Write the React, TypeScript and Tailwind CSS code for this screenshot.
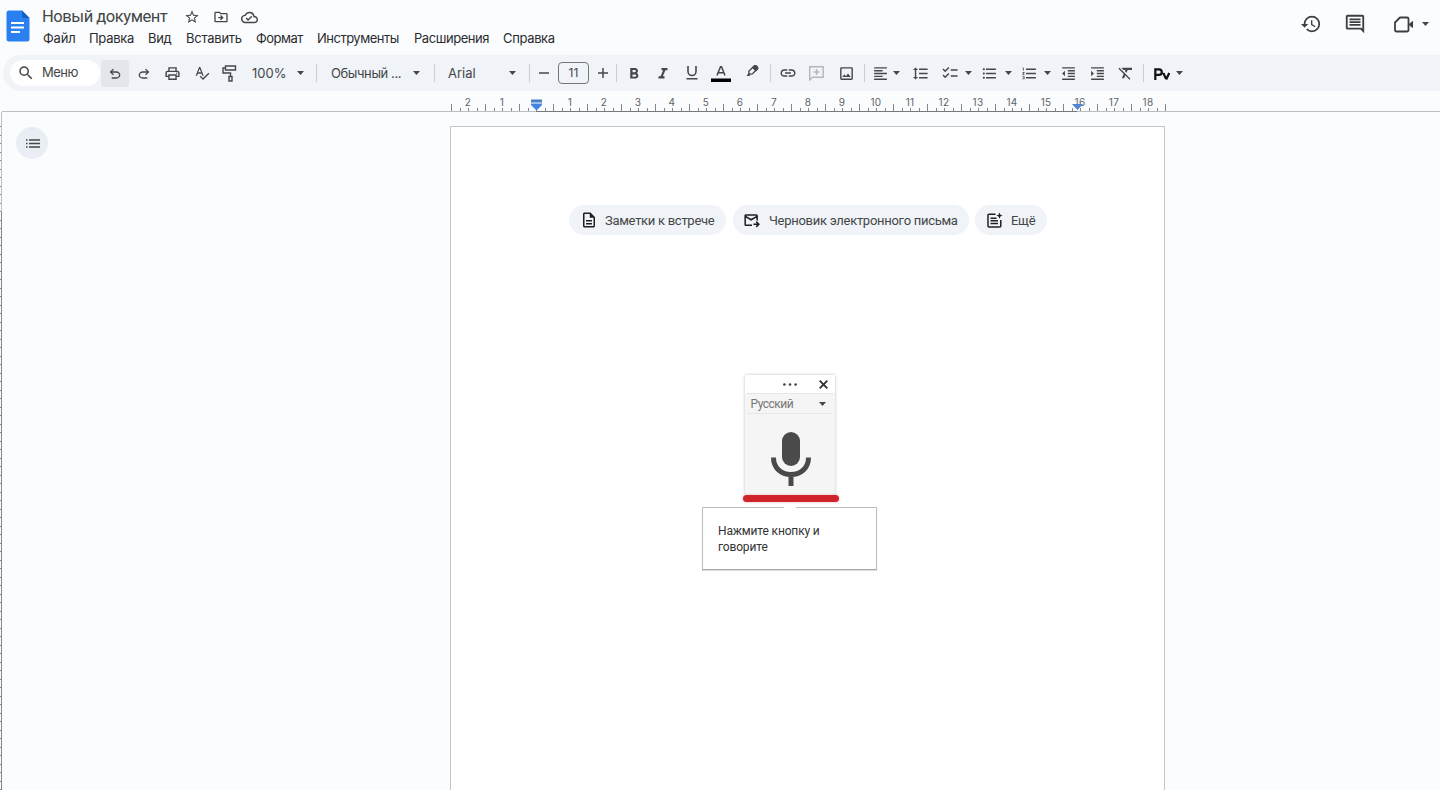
import type { ReactNode } from 'react';
import {
  MdStarOutline,
  MdOutlineDriveFileMove,
  MdOutlineCloudDone,
  MdHistory,
  MdOutlinePrint,
  MdSpellcheck,
  MdOutlineImage,
  MdFormatAlignLeft,
  MdFormatLineSpacing,
  MdChecklist,
  MdFormatListBulleted,
  MdFormatListNumbered,
  MdFormatIndentDecrease,
  MdFormatIndentIncrease,
  MdFormatClear,
  MdSearch,
  MdLink,
  MdFormatBold,
  MdFormatItalic,
  MdOutlineDescription,
  MdOutlineComment,
} from 'react-icons/md';

const Cell = ({ w, children }: { w: string; children?: ReactNode }) => (
  <div className={`flex h-full shrink-0 items-center justify-center ${w}`}>{children}</div>
);

const Sep = () => <div className="h-[18px] w-px shrink-0 bg-[#c9cdd3]" />;

const Caret = () => (
  <svg className="h-1 w-[7px] shrink-0" viewBox="0 0 8 4" preserveAspectRatio="none" fill="#444746">
    <path d="M0 0h8L4 4z" />
  </svg>
);

const menus = [
  { t: 'Файл', c: 'w-[46px] tracking-[-0.2px]' },
  { t: 'Правка', c: 'w-[59px] tracking-[-0.3px]' },
  { t: 'Вид', c: 'w-[38px] tracking-[-0.3px]' },
  { t: 'Вставить', c: 'w-[70px] tracking-[-0.25px]' },
  { t: 'Формат', c: 'w-[61px] tracking-[-0.5px]' },
  { t: 'Инструменты', c: 'w-[97px] tracking-[-0.5px]' },
  { t: 'Расширения', c: 'w-[89px] tracking-[-0.45px]' },
  { t: 'Справка', c: 'w-[60px] tracking-[-0.35px]' },
];

function Header() {
  return (
    <header className="flex h-[55px] shrink-0 items-start">
      <svg className="ml-[6px] mt-[10px] h-[32px] w-[24px] shrink-0" viewBox="0 0 24 32">
        <path d="M2.5 0.5H16L23.5 8V29a2.500 2.500 0 0 1-2.500 2.500H2.500A2.500 2.500 0 0 1 0.500 29V3A2.500 2.500 0 0 1 2.500 0.500z" fill="#2a80f0" />
        <path d="M16 0.500L23.500 8H18a2 2 0 0 1-2-2z" fill="#1560c8" />
        <path d="M5 13h13M5 17.500h13M5 22h9" stroke="#fff" strokeWidth="1.800" />
      </svg>
      <div className="ml-3 flex flex-col">
        <div className="mt-[6px] flex h-[22px] items-center text-[#444746]">
          <span className="w-[142px] whitespace-nowrap pt-px font-[family-name:Roboto,sans-serif] text-[16.5px] tracking-[-0.45px]">Новый документ</span>
          <MdStarOutline className="h-4 w-4" />
          <MdOutlineDriveFileMove className="ml-[13px] h-4 w-4" />
          <MdOutlineCloudDone className="ml-3 h-[17px] w-[17px]" />
        </div>
        <nav className="ml-px flex h-[21px] items-center text-[13px] text-[#2a2c2e]">
          {menus.map((m) => (
            <span key={m.t} className={`shrink-0 whitespace-nowrap ${m.c}`}>{m.t}</span>
          ))}
        </nav>
      </div>
      <div className="ml-auto mr-[11px] mt-[12px] flex h-6 items-center text-[#3c3f42]">
        <MdHistory className="mr-[22px] h-[22px] w-[22px]" />
        <MdOutlineComment className="mr-[28px] h-[22px] w-[22px]" />
        <svg className="mr-[8px] h-[17px] w-[20px]" viewBox="0 0 20 17" fill="none" stroke="currentColor" strokeWidth="1.800">
          <path d="M6 1.500h7a1.500 1.500 0 0 1 1.500 1.500v11a1.500 1.500 0 0 1-1.500 1.500H2.500A1.500 1.500 0 0 1 1 14V6.500z" strokeLinejoin="round" />
          <path d="M15 8.500l3.500-3v6z" fill="currentColor" strokeWidth="1" />
        </svg>
        <Caret />
      </div>
    </header>
  );
}

function Toolbar() {
  const i = 'h-[17px] w-[17px]';
  const undo =
    'M280-200v-80h284q63 0 109.500-40T720-420q0-60-46.500-100T564-560H312l104 104-56 56-200-200 200-200 56 56-104 104h252q97 0 166.500 63T800-420q0 94-69.500 157T564-200H280Z';
  return (
    <div className="ml-[3px] flex h-9 shrink-0 items-center overflow-hidden rounded-l-full bg-[#f0f3f8] text-[13px] text-[#444746]">
      <div className="ml-[7px] flex h-[26px] w-[90px] shrink-0 items-center rounded-full bg-white">
        <MdSearch className="ml-[7px] h-[18px] w-[18px]" />
        <span className="ml-[7px] tracking-[-0.5px]">Меню</span>
      </div>
      <div className="ml-px flex h-[27px] w-[28px] shrink-0 items-center justify-center rounded-[3px] bg-[#e3e6ea]">
        <svg className="mt-[2px] h-4 w-4" viewBox="0 -960 960 960" fill="currentColor"><path d={undo} /></svg>
      </div>
      <Cell w="w-[29px]">
        <svg className="mt-[2px] h-4 w-4 -scale-x-100" viewBox="0 -960 960 960" fill="currentColor"><path d={undo} /></svg>
      </Cell>
      <Cell w="w-[29px]"><MdOutlinePrint className={i} /></Cell>
      <Cell w="w-[29px]"><MdSpellcheck className="h-4 w-4" /></Cell>
      <Cell w="w-[27px]">
        <svg className="h-[17px] w-[15px]" viewBox="0 0 15 17" fill="none" stroke="currentColor" strokeWidth="1.400">
          <path d="M3.500 1h10v4h-10zM3.500 3H1v5h7.500v3.500M7 11.500h3V16H7z" />
        </svg>
      </Cell>
      <div className="ml-[9px] w-[45px] shrink-0 pt-px">100%</div>
      <Caret />
      <div className="w-[12px] shrink-0" /><Sep />
      <div className="ml-[14px] w-[82px] shrink-0 whitespace-nowrap pt-px tracking-[-0.4px]">Обычный ...</div>
      <Caret />
      <div className="w-[14px] shrink-0" /><Sep />
      <div className="ml-[13px] w-[61px] shrink-0 pt-px">Arial</div>
      <Caret />
      <div className="w-[13px] shrink-0" /><Sep />
      <Cell w="w-[28px]">
        <svg className="h-[10px] w-[10px]" viewBox="0 0 11 11" stroke="currentColor" strokeWidth="1.600"><path d="M0 5.500h11" /></svg>
      </Cell>
      <div className="flex h-[22px] w-[31px] shrink-0 items-center justify-center rounded-[4px] border border-[#747775] text-[12px]">11</div>
      <Cell w="w-[27px]">
        <svg className="h-[10px] w-[10px]" viewBox="0 0 11 11" stroke="currentColor" strokeWidth="1.600"><path d="M0 5.500h11M5.500 0v11" /></svg>
      </Cell>
      <Sep />
      <Cell w="w-[33px]"><MdFormatBold className="mt-px h-[18px] w-[18px]" /></Cell>
      <Cell w="w-[26px]"><MdFormatItalic className="mt-[2px] h-[18px] w-[18px]" /></Cell>
      <Cell w="w-[31px]">
        <svg className="h-[14px] w-[12px]" viewBox="0 0 12 14" fill="none" stroke="currentColor">
          <path d="M2 0v5.500a4 4 0 0 0 8 0V0" strokeWidth="1.600" /><path d="M0.500 12.800h11" strokeWidth="1.400" />
        </svg>
      </Cell>
      <Cell w="w-[28px]">
        <svg className="mt-px h-[16px] w-[20px]" viewBox="0 0 20 16" fill="none">
          <path d="M6 9.500L9.500 0.800h1L14 9.500M7.200 6.800h5.600" stroke="currentColor" strokeWidth="1.500" />
          <path d="M0 12.500h20v3.500H0z" fill="#000" />
        </svg>
      </Cell>
      <Cell w="w-[34px]">
        <svg className="mb-[4px] h-[12px] w-[13px]" viewBox="0 0 14 13" fill="none" stroke="currentColor" strokeWidth="1.500">
          <path d="M3.200 6.500L8.800 1.200Q10.200 0.200 11.500 1.200L12.200 2Q13.200 3.200 12 4.500L6.800 9.700L3 10z" />
          <path d="M7.500 2.800L9.500 1L12.500 4L10.300 6z" fill="currentColor" />
          <path d="M0.500 12H3.500L5 10.200L2.800 9z" fill="currentColor" stroke="none" />
        </svg>
      </Cell>
      <div className="w-px shrink-0" /><Sep />
      <Cell w="w-[33px]"><MdLink className="h-[18px] w-[18px]" /></Cell>
      <Cell w="w-[25px]">
        <svg className="h-[15px] w-[15px] text-[#b3b7bb]" viewBox="0 0 15 15" fill="none" stroke="currentColor" strokeWidth="1.400">
          <path d="M0.700 14V0.800h13.500v10.500H3.500zM7.500 3v6M4.500 6h6" />
        </svg>
      </Cell>
      <Cell w="w-[34px]"><MdOutlineImage className={i} /></Cell>
      <div className="w-px shrink-0" /><Sep />
      <Cell w="w-[30px]"><MdFormatAlignLeft className={i} /></Cell>
      <div className="-ml-[2px]"><Caret /></div>
      <Cell w="w-[40px]"><MdFormatLineSpacing className={i} /></Cell>
      <Cell w="w-[20px]"><MdChecklist className="h-[18px] w-[18px]" /></Cell>
      <div className="ml-[5px]"><Caret /></div>
      <Cell w="w-[35px]"><MdFormatListBulleted className="h-[17px] w-[17px]" /></Cell>
      <div className="-ml-[2px]"><Caret /></div>
      <Cell w="w-[34px]"><MdFormatListNumbered className="h-[17px] w-[17px]" /></Cell>
      <div className="-ml-[2px]"><Caret /></div>
      <Cell w="w-[34px]"><MdFormatIndentDecrease className={i} /></Cell>
      <Cell w="w-[25px]"><MdFormatIndentIncrease className={i} /></Cell>
      <Cell w="w-[32px]"><MdFormatClear className="h-[18px] w-[18px]" /></Cell>
      <div className="w-px shrink-0" /><Sep />
      <Cell w="w-[36px]">
        <svg className="mt-[3px] h-[13px] w-[16px]" viewBox="0 0 16 13" fill="none" stroke="#111" strokeWidth="2.200">
          <path d="M1.300 12V1.300h3.700a2.700 2.700 0 0 1 0 5.600H1.300M9.300 5l2.800 6M15.200 5l-3 6.500" />
        </svg>
      </Cell>
      <div className="-ml-[4px]"><Caret /></div>
    </div>
  );
}

function Ruler() {
  const cells = Array.from({ length: 21 }, (_, n) => n - 2);
  return (
    <div className="relative h-[21px] w-full shrink-0">
      <div className="ml-[451px] flex h-5">
        {cells.map((n) => (
          <div key={n} className="flex w-[34px] shrink-0 flex-col">
            <div className="flex h-[13px] items-start pt-[5px]">
              <span className="w-[34px] text-center text-[10px] leading-[12px] tracking-[0.3px] text-[#606366]">
                {n === 0 ? '\u00a0' : Math.abs(n)}
              </span>
            </div>
            <div className="flex h-[7px] items-end">
              <i className="mr-[7.500px] h-[7px] w-px bg-[#85888b]" />
              <i className="mr-[7.500px] h-[3px] w-px bg-[#85888b]" />
              <i className="mr-[7.500px] h-[3px] w-px bg-[#85888b]" />
              <i className="h-[3px] w-px bg-[#85888b]" />
            </div>
          </div>
        ))}
        <i className="mt-[13px] h-[7px] w-px bg-[#85888b]" />
      </div>
      <div className="flex h-px">
        <div className="ml-[2px] w-[534px] bg-[#bcbfc2]" />
        <div className="w-[541px] bg-[#77797c]" />
        <div className="grow bg-[#bcbfc2]" />
      </div>
      <svg className="absolute left-[531px] top-[8px] h-[12px] w-[11px]" viewBox="0 0 11 12">
        <path d="M0 0.500h11v3H0z" fill="#4a7fc4" />
        <path d="M0 4.500h11v1.500L5.500 11.500L0 6z" fill="#4384e0" />
      </svg>
      <svg className="absolute left-[1072px] top-[13px] h-[6px] w-[11px]" viewBox="0 0 11 6">
        <path d="M0 0h11L5.500 6z" fill="#4c86d0" />
      </svg>
    </div>
  );
}

function SideRuler() {
  const ticks = Array.from({ length: 80 }, (_, n) => n);
  return (
    <div className="flex h-full w-[2px] shrink-0">
      <div className="flex w-px flex-col overflow-hidden pt-[14px]">
        {ticks.map((n) => (
          <i key={n} className="mb-[7.500px] h-px w-px shrink-0 bg-[#85888b]" />
        ))}
      </div>
      <div className="flex w-px flex-col">
        <div className="h-[100px] bg-[#bcbfc2]" />
        <div className="grow bg-[#85888b]" />
      </div>
    </div>
  );
}

const Chip = ({ w, icon, children }: { w: string; icon: ReactNode; children: ReactNode }) => (
  <button className={`flex h-[30px] items-center whitespace-nowrap rounded-full bg-[#f0f3f8] pl-[11px] font-[family-name:Roboto,sans-serif] text-[13px] tracking-[-0.28px] text-[#444746] ${w}`}>
    <span className="flex w-[25px] shrink-0">{icon}</span>
    <span className="pt-px">{children}</span>
  </button>
);

function VoicePanel() {
  return (
    <div className="absolute left-[251px] top-[248px] flex w-[175px] flex-col items-center font-[family-name:Roboto,sans-serif]">
      <div className="flex h-[120px] w-[90px] flex-col bg-[#f5f5f5] shadow-[0_0_3px_rgba(0,0,0,0.25)]">
        <div className="flex h-[18px] items-center bg-white">
          <svg className="ml-[38px] h-[3px] w-[14px]" viewBox="0 0 15 3" fill="#444">
            <circle cx="1.500" cy="1.500" r="1.400" /><circle cx="7.500" cy="1.500" r="1.400" /><circle cx="13.500" cy="1.500" r="1.400" />
          </svg>
          <svg className="ml-[22px] h-[9px] w-[9px]" viewBox="0 0 9 9" stroke="#333" strokeWidth="1.900"><path d="M0.700 0.700l7.600 7.600M8.300 0.700L0.700 8.300" /></svg>
        </div>
        <div className="mx-[2px] flex h-[21px] items-center border-b border-t border-[#e6e6e6] text-[12px] tracking-[-0.5px] text-[#777]">
          <span className="ml-[4px] w-[68px]">Русский</span>
          <Caret />
        </div>
        <svg className="ml-[26px] mt-[17px] h-[56px] w-[40px]" viewBox="0 0 40 56" fill="none">
          <rect x="11" y="1" width="18" height="34" rx="9" fill="#4a4a4a" />
          <path d="M2.500 26.500C2.500 37 10 43.500 20 43.500S37.500 37 37.500 26.500M20 43.500V55" stroke="#4a4a4a" strokeWidth="5" />
        </svg>
      </div>
      <div className="ml-[2px] h-[7px] w-[96px] rounded-full bg-[#d0242d] shadow-[0_0_3px_#f3b5b8]" />
      <div className="relative mt-[5px] h-[63px] w-[175px] border border-[#bdbdbd] border-b-[#a5a5a5] bg-white pl-[15px] pt-[15px] text-[12px] leading-4 tracking-[-0.15px] text-[#333] shadow-[0_1px_1px_rgba(0,0,0,0.12)]">
        <svg className="absolute left-[79px] top-[-6px] h-[7px] w-[16px]" viewBox="0 0 16 7"><path d="M0 7L8 1L16 7z" fill="#fff" /></svg>
        Нажмите кнопку и<br />говорите
      </div>
    </div>
  );
}

export default function App() {
  return (
    <div className="flex h-[790px] w-[1440px] flex-col overflow-hidden bg-[#fafcfe] font-[Inter,'Noto_Sans',sans-serif]">
      <Header />
      <Toolbar />
      <Ruler />
      <main className="flex min-h-0 grow">
        <SideRuler />
        <div className="w-[448px] shrink-0 pl-[14px] pt-[15px]">
          <div className="flex h-[32px] w-[32px] items-center justify-center rounded-full bg-[#e9edf4]">
            <svg className="ml-px h-[9px] w-[14px]" viewBox="0 0 14 9" stroke="#444746" strokeWidth="1.500">
              <path d="M0 1h1.500M3 1h11M0 4.500h1.500M3 4.500h11M0 8h1.500M3 8h11" />
            </svg>
          </div>
        </div>
        <div className="relative mt-[14px] w-[715px] shrink-0 border border-b-0 border-[#c4c7ca] bg-white">
          <div className="ml-[118px] mt-[78px] flex">
            <Chip w="w-[157px]" icon={<MdOutlineDescription className="h-[18px] w-[18px] text-[#1f1f1f]" />}>Заметки к встрече</Chip>
            <div className="w-[7px]" />
            <Chip
              w="w-[236px]"
              icon={
                <svg className="h-[15px] w-[16px] text-[#1f1f1f]" viewBox="0 0 17 16" fill="none" stroke="currentColor" strokeWidth="1.600">
                  <path d="M8.500 13H2a.8 .8 0 0 1-.8-.8V2.800A.8 .8 0 0 1 2 2h11.200a.8 .8 0 0 1 .8.8V8M1.500 3.500L7.600 7.200L13.800 3.500" />
                  <path d="M10 12h5.500M13 9.200L15.800 12L13 14.800" />
                </svg>
              }
            >
              Черновик электронного письма
            </Chip>
            <div className="w-[6px]" />
            <Chip
              w="w-[72px]"
              icon={
                <svg className="h-[17px] w-[17px] text-[#1f1f1f]" viewBox="0 0 17 17" fill="none" stroke="currentColor" strokeWidth="1.500">
                  <path d="M9.500 2.200H3A1 1 0 0 0 2 3.200V14a1 1 0 0 0 1 1h10.800a1 1 0 0 0 1-1V8M4.500 6.200h6M4.500 8.800h7.500M4.500 11.500h7.500" />
                  <path d="M13.500 0.500l0.900 2.200 2.200 0.900-2.200 0.900-0.900 2.200-0.900-2.200-2.200-0.900 2.200-0.900z" fill="currentColor" stroke="none" />
                </svg>
              }
            >
              Ещё
            </Chip>
          </div>
          <VoicePanel />
        </div>
      </main>
    </div>
  );
}
